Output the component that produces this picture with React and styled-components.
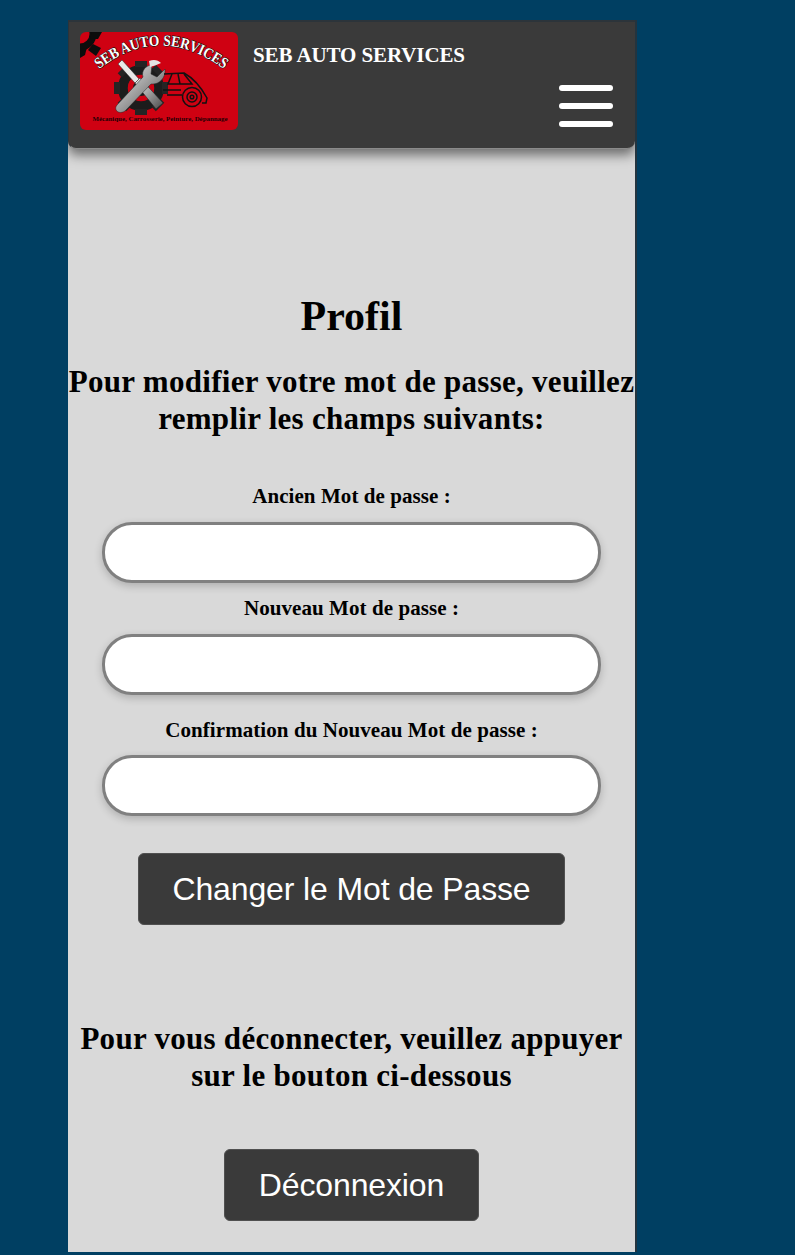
import React from 'react'
import styled, { createGlobalStyle } from 'styled-components'

const GlobalStyle = createGlobalStyle`
  html, body {
    margin: 0;
    padding: 0;
    background: #003f62;
  }
  body {
    font-family: "Liberation Serif", "Times New Roman", serif;
  }
`

const Page = styled.div`
  height: 1255px;
  overflow: hidden;
  padding: 20px 0 0 68px;
  box-sizing: border-box;
`

const Panel = styled.div`
  width: 567px;
  height: 1232px;
  overflow: hidden;
  background: #d9d9d9;
  border-right: 2px solid #23343f;
  display: flex;
  flex-direction: column;
  align-items: center;
`

const Header = styled.header`
  width: 100%;
  height: 129px;
  flex: none;
  box-sizing: border-box;
  background: #3a3a3a;
  border-top: 2px solid #2c343a;
  border-left: 1px solid #2c343a;
  border-bottom: 1px solid #8a8a8a;
  border-radius: 0 0 8px 8px;
  box-shadow: 0 6px 12px rgba(0, 0, 0, 0.5);
  padding: 10px 22px 0 11px;
  display: flex;
`

const Logo = styled.svg`
  width: 158px;
  height: 98px;
  flex: none;
  border-radius: 6px;
`

const Brand = styled.div`
  margin: 11px 0 0 15px;
  color: #fff;
  font-size: 21px;
  letter-spacing: -0.1px;
  font-weight: bold;
  line-height: 24px;
  flex: 1;
`

const Burger = styled.div`
  width: 54px;
  margin-top: 53px;
  display: flex;
  flex-direction: column;
  gap: 12px;
  flex: none;
`

const BurgerBar = styled.span`
  display: block;
  height: 6px;
  border-radius: 3px;
  background: #fff;
`

const Title = styled.h1`
  margin: 141px 0 0;
  font-size: 42px;
  line-height: 52px;
  font-weight: bold;
  color: #000;
  text-align: center;
`

const Subtitle = styled.h2`
  margin: ${props => props.$top}px 0 0;
  padding: 0 ${props => props.$inset}px;
  font-size: 31px;
  letter-spacing: 0.28px;
  line-height: 37px;
  font-weight: bold;
  color: #000;
  text-align: center;
`

const Form = styled.form`
  width: 100%;
  display: flex;
  flex-direction: column;
  align-items: center;
`

const Label = styled.label`
  margin-top: ${props => props.$top}px;
  font-size: 21px;
  letter-spacing: 0.07px;
  line-height: 24px;
  font-weight: bold;
  color: #000;
`

const Input = styled.input`
  width: 499px;
  height: 61px;
  margin-top: ${props => props.$top}px;
  box-sizing: border-box;
  background: #fff;
  border: 3px solid #808080;
  border-radius: 30px;
  box-shadow: 0 3px 8px rgba(0, 0, 0, 0.2);
  outline: none;
`

const Button = styled.button`
  width: ${props => props.$width}px;
  height: 72px;
  margin-top: ${props => props.$top}px;
  background: #3a3a3a;
  color: #fff;
  border: 1px solid #505050;
  border-radius: 6px;
  font-family: "Liberation Sans", Arial, sans-serif;
  font-size: 32px;
  letter-spacing: -0.13px;
  padding: 0;
`

function LogoArt() {
  return (
    <Logo viewBox="0 0 158 98">
      <defs>
        <path id="logo-arc" d="M18 38 Q80 -11 145 38" />
        <linearGradient id="logo-steel" x1="0" y1="0" x2="1" y2="1">
          <stop offset="0" stopColor="#f2f2f2" />
          <stop offset="1" stopColor="#4a4a4a" />
        </linearGradient>
      </defs>
      <rect width="158" height="98" fill="#cf0112" />
      {/* gear in the top left corner */}
      <g fill="#0c0c0c">
        <circle cx="0" cy="2" r="13" fill="none" stroke="#0c0c0c" strokeWidth="7" />
        <path d="M12 0 H22 L18 7 H10 Z M13 12 L21 16 L16 24 L8 18 Z M0 15 H7 L5 23 L0 26 Z" />
      </g>
      {/* central gear */}
      <g transform="translate(61 56)">
        <circle r="18" fill="none" stroke="#1c1c1c" strokeWidth="10" />
        <circle r="8" fill="#1a1a1a" />
        <circle r="12" fill="none" stroke="#cf0112" strokeWidth="2.5" />
        <g fill="#242424">
          <rect x="-6" y="-27" width="12" height="6" />
          <rect x="-6" y="21" width="12" height="6" />
          <rect x="-27" y="-6" width="6" height="12" />
          <rect x="21" y="-6" width="6" height="12" />
          <rect x="-6" y="-27" width="12" height="6" transform="rotate(45)" />
          <rect x="-6" y="21" width="12" height="6" transform="rotate(45)" />
          <rect x="-27" y="-6" width="6" height="12" transform="rotate(45)" />
          <rect x="21" y="-6" width="6" height="12" transform="rotate(45)" />
        </g>
      </g>
      {/* crossed tools */}
      <path d="M38 32 L42 28 L59 47 L55 51 Z" fill="#e8e8e8" stroke="#222" strokeWidth="0.5" />
      <path d="M55 51 L60 46 L83 71 L76 77 Z" fill="url(#logo-steel)" stroke="#222" strokeWidth="0.5" />
      <path
        d="M37 73 L63 45 C61 39 66 33 72 33 L71 42 L77 45 L85 37 C86 46 79 53 71 52 L45 79 C39 83 33 78 37 73 Z"
        fill="url(#logo-steel)"
        stroke="#222"
        strokeWidth="0.5"
      />
      <path d="M69 29 C74 27 78 28 81 31 C77 33 73 34 70 35 Z" fill="#e4e4e4" />
      {/* car */}
      <g fill="none" stroke="#111" strokeWidth="1.5">
        <path d="M84 42 L104 41 C113 46 121 55 127 66 L126 71 L122 71" />
        <path d="M87 63 L102 63 M83 58 L101 58 M92 42 L88 52 L100 52 L98 42 M104 42 L112 52 L100 52" />
        <circle cx="112" cy="65" r="9.5" />
        <circle cx="112" cy="65" r="5" />
        <circle cx="112" cy="65" r="1.8" />
      </g>
      {/* arched name */}
      <text
        fontFamily="Liberation Serif, serif"
        fontWeight="bold"
        fontSize="15.5"
        fill="#fff"
        stroke="#111"
        strokeWidth="1.2"
        paintOrder="stroke"
      >
        <textPath href="#logo-arc" startOffset="50%" textAnchor="middle" textLength="136" lengthAdjust="spacingAndGlyphs">
          SEB AUTO SERVICES
        </textPath>
      </text>
      {/* tag line */}
      <text
        x="80"
        y="89"
        textAnchor="middle"
        fontFamily="Liberation Serif, serif"
        fontWeight="bold"
        fontSize="6"
        fill="#1c0004"
        textLength="135"
        lengthAdjust="spacingAndGlyphs"
      >
        Mécanique, Carrosserie, Peinture, Dépannage
      </text>
    </Logo>
  )
}

function App() {
  return (
    <Page>
      <GlobalStyle />
      <Panel>
        <Header>
          <LogoArt />
          <Brand>SEB AUTO SERVICES</Brand>
          <Burger>
            <BurgerBar />
            <BurgerBar />
            <BurgerBar />
          </Burger>
        </Header>
        <Title>Profil</Title>
        <Subtitle $top={21} $inset={0}>
          Pour modifier votre mot de passe, veuillez remplir les champs suivants:
        </Subtitle>
        <Form onSubmit={e => e.preventDefault()}>
          <Label $top={47}>Ancien Mot de passe :</Label>
          <Input type="password" $top={14} />
          <Label $top={13}>Nouveau Mot de passe :</Label>
          <Input type="password" $top={14} />
          <Label $top={23}>Confirmation du Nouveau Mot de passe :</Label>
          <Input type="password" $top={13} />
          <Button type="submit" $width={427} $top={37}>Changer le Mot de Passe</Button>
        </Form>
        <Subtitle $top={95} $inset={8}>
          Pour vous déconnecter, veuillez appuyer sur le bouton ci-dessous
        </Subtitle>
        <Button type="button" $width={255} $top={55}>Déconnexion</Button>
      </Panel>
    </Page>
  )
}

export default App
